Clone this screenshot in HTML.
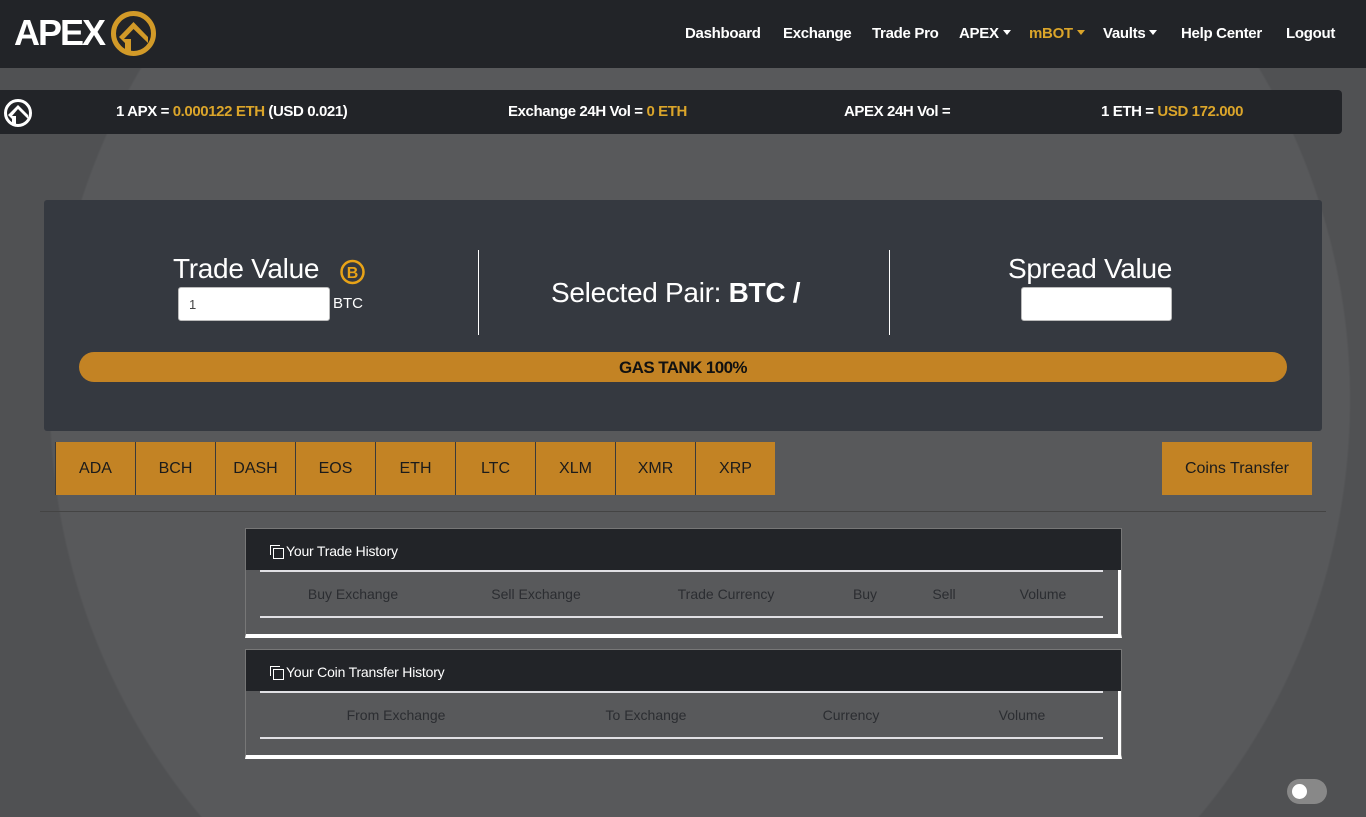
<!DOCTYPE html>
<html style="width:1366px;height:817px;overflow:hidden"><head><meta charset="utf-8">
<style>
*{margin:0;padding:0;box-sizing:border-box}
body{width:1366px;height:817px;overflow:hidden;background:radial-gradient(circle 650px at 700px 400px,#58595b 649px,#505153 651px);font-family:"Liberation Sans",sans-serif;color:#fff}
#w{position:relative;width:1366px;height:817px;overflow:hidden}
.a{position:absolute;white-space:nowrap}
.nav{position:absolute;left:0;top:0;width:1366px;height:68px;background:#222428}
.nav span{position:absolute;top:25px;font-size:15px;font-weight:bold;letter-spacing:-0.3px}
.car{display:inline-block;border-left:4px solid transparent;border-right:4px solid transparent;border-top:5px solid currentColor;vertical-align:3px;margin-left:4px}
.tick{position:absolute;left:0;top:90px;width:1342px;height:44px;background:#222428;border-radius:0 4px 4px 0}
.tick span{position:absolute;top:13px;font-size:15px;font-weight:bold;letter-spacing:-0.4px}
.g{color:#dba52a}
.card{position:absolute;left:44px;top:200px;width:1278px;height:231px;background:#353940;border-radius:3px}
.h{font-size:28px;letter-spacing:-0.3px;text-align:center}
.inp{position:absolute;background:#fff;border:1px solid #bbb;border-radius:3px;height:34px}
.vl{position:absolute;width:1px;height:85px;top:250px;background:#fff}
.gas{position:absolute;left:79px;top:352px;width:1208px;height:30px;border-radius:15px;background:#c38324;color:#111;font-weight:bold;font-size:17px;text-align:center;line-height:32px;letter-spacing:-0.6px}
.btn{position:absolute;top:442px;height:53px;width:80px;background:#c38324;color:#1b1b1b;font-size:16px;text-align:center;line-height:54px;border-left:1px solid #3a3a3a}
.hr{position:absolute;left:40px;top:511px;width:1286px;height:1px;background:#444}
.tbl{position:absolute;left:245px;width:877px;border:1px solid #777;border-bottom:4px solid #fff}
.tbl .hd{height:41px;background:#222428;font-size:14px;padding:14px 0 0 24px;letter-spacing:-0.2px}
.tbl .bd{position:relative;height:64px;border-right:3px solid #fff}
.tbl .ln{position:absolute;left:14px;width:843px;height:2px;background:#e0e0e4}
.tbl .c{position:absolute;top:16px;font-size:14px;color:#2b2d31;transform:translateX(-50%);white-space:nowrap}
.ic{display:inline-block;width:13px;height:13px;position:relative;vertical-align:-2px;margin-right:3px}
.ic:before,.ic:after{content:"";position:absolute;width:9px;height:9px;border:1.5px solid #fff}
.ic:before{left:0;top:0;border-right:none;border-bottom:none}
.ic:after{left:3px;top:3px;background:#222428}
</style></head><body><div id="w">
<div class="nav">
 <div class="a" style="left:14px;top:12px;font-size:36px;font-weight:bold;letter-spacing:-2px;line-height:42px">APEX</div>
 <svg class="a" style="left:111px;top:11px" width="45" height="45" viewBox="0 0 45 45"><circle cx="22.5" cy="22.5" r="20" fill="none" stroke="#d29a28" stroke-width="5"/><path d="M8 26 L22.5 11 L37 26 L37 32 L22.5 18 L13 28 L20 28 L20 40 L14 40 L14 32 Z" fill="#d29a28"/></svg>
 <span style="left:685px">Dashboard</span>
 <span style="left:783px">Exchange</span>
 <span style="left:872px">Trade Pro</span>
 <span style="left:959px">APEX<i class="car"></i></span>
 <span style="left:1029px;color:#dba52a">mBOT<i class="car"></i></span>
 <span style="left:1103px">Vaults<i class="car"></i></span>
 <span style="left:1181px">Help Center</span>
 <span style="left:1286px">Logout</span>
</div>
<div class="tick">
 <svg class="a" style="left:3px;top:8px" width="30" height="30" viewBox="0 0 30 30"><circle cx="15" cy="15" r="12.5" fill="none" stroke="#fff" stroke-width="3"/><path d="M5 17 L15 7 L25 17 L25 21 L15 11 L9 18 L13 18 L13 26 L9 26 L9 21 Z" fill="#fff"/></svg>
 <span style="left:116px">1 APX = <b class="g">0.000122 ETH</b> (USD 0.021)</span>
 <span style="left:508px">Exchange 24H Vol = <b class="g">0 ETH</b></span>
 <span style="left:844px">APEX 24H Vol =</span>
 <span style="left:1101px">1 ETH = <b class="g">USD 172.000</b></span>
</div>
<div class="card"></div>
<div class="a h" style="left:173px;top:253px">Trade Value</div>
<svg class="a" style="left:337px;top:259px" width="31" height="26" viewBox="0 0 26 26"><circle cx="13" cy="13" r="11" fill="none" stroke="#e8a317" stroke-width="2.5"/><text x="13" y="19" text-anchor="middle" font-family="Liberation Sans" font-weight="bold" font-size="16" fill="#e8a317">B</text></svg>
<div class="inp" style="left:178px;top:287px;width:152px"><span class="a" style="left:10px;top:9px;font-size:13px;color:#444">1</span></div>
<div class="a" style="left:333px;top:295px;font-size:15px">BTC</div>
<div class="vl" style="left:478px"></div>
<div class="vl" style="left:889px"></div>
<div class="a h" style="left:551px;top:277px">Selected Pair: <b>BTC /</b></div>
<div class="a h" style="left:1008px;top:253px">Spread Value</div>
<div class="inp" style="left:1021px;top:287px;width:151px"></div>
<div class="gas">GAS TANK 100%</div>
<div class="btn" style="left:55px">ADA</div>
<div class="btn" style="left:135px">BCH</div>
<div class="btn" style="left:215px">DASH</div>
<div class="btn" style="left:295px">EOS</div>
<div class="btn" style="left:375px">ETH</div>
<div class="btn" style="left:455px">LTC</div>
<div class="btn" style="left:535px">XLM</div>
<div class="btn" style="left:615px">XMR</div>
<div class="btn" style="left:695px">XRP</div>
<div class="btn" style="left:1162px;width:150px;border:none">Coins Transfer</div>
<div class="hr"></div>
<div class="tbl" style="top:528px">
 <div class="hd"><i class="ic"></i>Your Trade History</div>
 <div class="bd"><div class="ln" style="top:0"></div><div class="ln" style="top:46px"></div>
  <span class="c" style="left:107px">Buy Exchange</span><span class="c" style="left:290px">Sell Exchange</span><span class="c" style="left:480px">Trade Currency</span><span class="c" style="left:619px">Buy</span><span class="c" style="left:698px">Sell</span><span class="c" style="left:797px">Volume</span>
 </div>
</div>
<div class="tbl" style="top:649px">
 <div class="hd"><i class="ic"></i>Your Coin Transfer History</div>
 <div class="bd"><div class="ln" style="top:0"></div><div class="ln" style="top:46px"></div>
  <span class="c" style="left:150px">From Exchange</span><span class="c" style="left:400px">To Exchange</span><span class="c" style="left:605px">Currency</span><span class="c" style="left:776px">Volume</span>
 </div>
</div>
<div class="a" style="left:1287px;top:779px;width:40px;height:25px;border-radius:13px;background:#888"><div class="a" style="left:5px;top:5px;width:15px;height:15px;border-radius:50%;background:#fff"></div></div>
</div></body></html>
